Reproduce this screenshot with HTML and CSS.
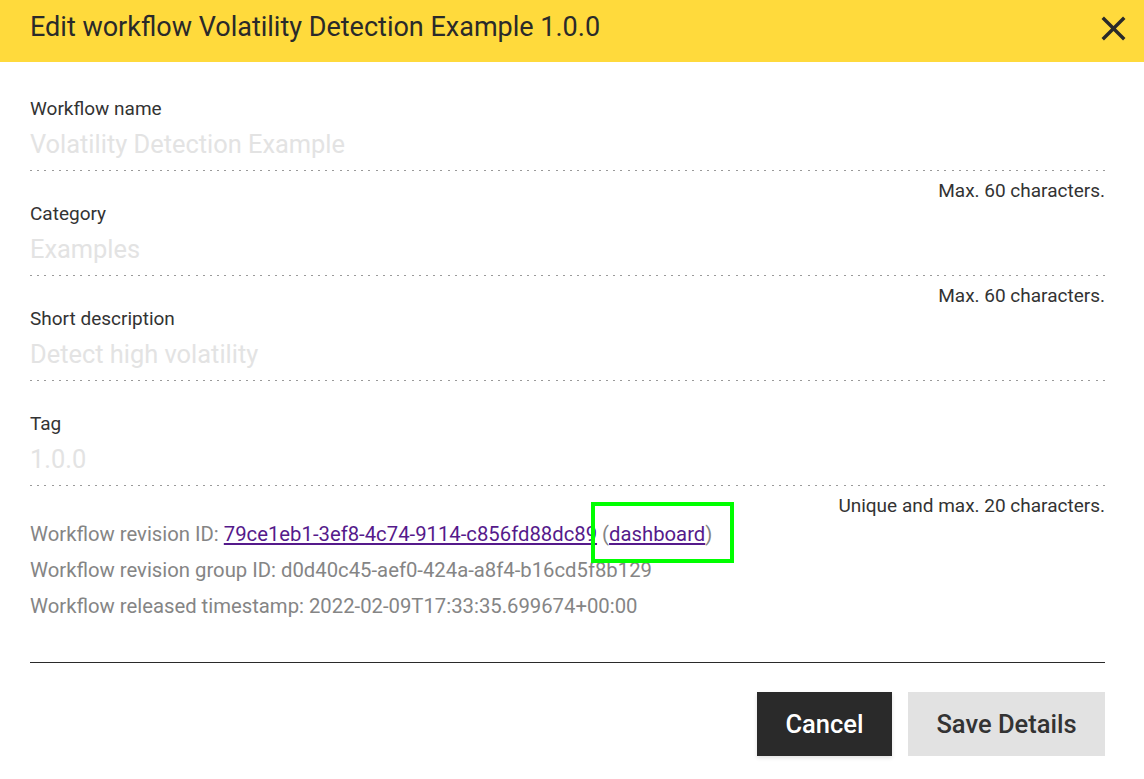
FILE: index.html
```html
<!DOCTYPE html>
<html lang="en">
<head>
<meta charset="utf-8">
<title>Edit workflow</title>
<link rel="stylesheet" href="styles.css">
</head>
<body>
<div class="dialog">
  <header class="dialog-header">
    <h1 class="dialog-title">Edit workflow Volatility Detection Example 1.0.0</h1>
    <button class="close-btn" aria-label="Close">
      <svg viewBox="0 0 24 24" width="41" height="41"><path d="M19 6.41L17.59 5 12 10.59 6.41 5 5 6.41 10.59 12 5 17.59 6.41 19 12 13.41 17.59 19 19 17.59 13.41 12z" fill="#2a2a2a"/></svg>
    </button>
  </header>
  <div class="dialog-body">
    <div class="field">
      <div class="field-label">Workflow name</div>
      <div class="field-value">Volatility Detection Example</div>
      <div class="field-line"></div>
      <div class="field-help">Max. 60 characters.</div>
    </div>
    <div class="field">
      <div class="field-label">Category</div>
      <div class="field-value">Examples</div>
      <div class="field-line"></div>
      <div class="field-help">Max. 60 characters.</div>
    </div>
    <div class="field">
      <div class="field-label">Short description</div>
      <div class="field-value">Detect high volatility</div>
      <div class="field-line"></div>
      <div class="field-help"></div>
    </div>
    <div class="field">
      <div class="field-label">Tag</div>
      <div class="field-value">1.0.0</div>
      <div class="field-line"></div>
      <div class="field-help">Unique and max. 20 characters.</div>
    </div>
    <div class="info">
      <div class="info-line">Workflow revision ID: <a class="info-link" href="#">79ce1eb1-3ef8-4c74-9114-c856fd88dc89</a> <span class="highlighted">(<a class="info-link" href="#">dashboard</a>)</span></div>
      <div class="info-line">Workflow revision group ID: d0d40c45-aef0-424a-a8f4-b16cd5f8b129</div>
      <div class="info-line">Workflow released timestamp: 2022-02-09T17:33:35.699674+00:00</div>
    </div>
    <div class="divider"></div>
    <div class="actions">
      <button class="btn btn-dark">Cancel</button>
      <button class="btn btn-light">Save Details</button>
    </div>
  </div>
</div>
</body>
</html>
```
FILE: styles.css
```css
html, body {
  margin: 0;
  padding: 0;
  background: #ffffff;
}
body {
  font-family: Roboto, "Liberation Sans", Arial, sans-serif;
  color: #2a2a2a;
}
.dialog {
  width: 1144px;
  height: 779px;
  overflow: hidden;
  background: #fff;
}
.dialog-header {
  height: 62px;
  background: #ffda3c;
  display: flex;
  align-items: center;
  justify-content: space-between;
  padding: 0 10px 0 30px;
  box-sizing: border-box;
}
.dialog-title {
  margin: 0;
  font-size: 27px;
  font-weight: 400;
  line-height: 32px;
  color: #2a2a2a;
  position: relative;
  top: -4.5px;
}
.close-btn {
  border: 0;
  background: transparent;
  padding: 0;
  width: 41px;
  height: 41px;
  display: flex;
  cursor: pointer;
  position: relative;
  top: -3px;
}
.dialog-body {
  padding: 36.2px 39px 0 30px;
}
.field {
  display: flex;
  flex-direction: column;
  padding-bottom: 1.2px;
}
.field-label {
  font-size: 19px;
  line-height: 22px;
  color: #333;
}
.field-value {
  margin-top: 9px;
  font-size: 25.4px;
  line-height: 30px;
  color: #e3e3e3;
}
.field-line {
  margin-top: 10.8px;
  height: 1.5px;
  background-image: repeating-linear-gradient(to right, #9a9a9a 0, #9a9a9a 2px, transparent 2px, transparent 7.2px);
}
.field-help {
  margin-top: 8.5px;
  height: 22px;
  font-size: 19px;
  line-height: 22px;
  text-align: right;
  color: #333;
}
.info {
  margin-top: -1.3px;
}
.info-line {
  font-size: 20.3px;
  line-height: 35.9px;
  color: #858585;
  white-space: nowrap;
}
.info-link {
  color: #551a8b;
  text-decoration: underline;
}
.highlighted {
  position: relative;
}
.highlighted::after {
  content: "";
  position: absolute;
  left: -11px;
  right: -22px;
  top: -20px;
  bottom: -17px;
  border: 4px solid #00ff00;
  pointer-events: none;
}
.divider {
  margin-top: 37px;
  height: 1px;
  background: #2a2a2a;
}
.actions {
  display: flex;
  justify-content: flex-end;
  gap: 16px;
  margin-top: 29px;
}
.btn {
  height: 64px;
  border: 0;
  border-radius: 0;
  font-family: Roboto, "Liberation Sans", Arial, sans-serif;
  font-size: 25.5px;
  font-weight: 500;
  cursor: pointer;
  padding: 0;
}
.btn-dark {
  width: 135px;
  background: #2a2a2a;
  color: #ffffff;
  box-shadow: 0 2px 4px rgba(0,0,0,0.12);
}
.btn-light {
  width: 197px;
  background: #e2e2e2;
  color: #333;
}
```
